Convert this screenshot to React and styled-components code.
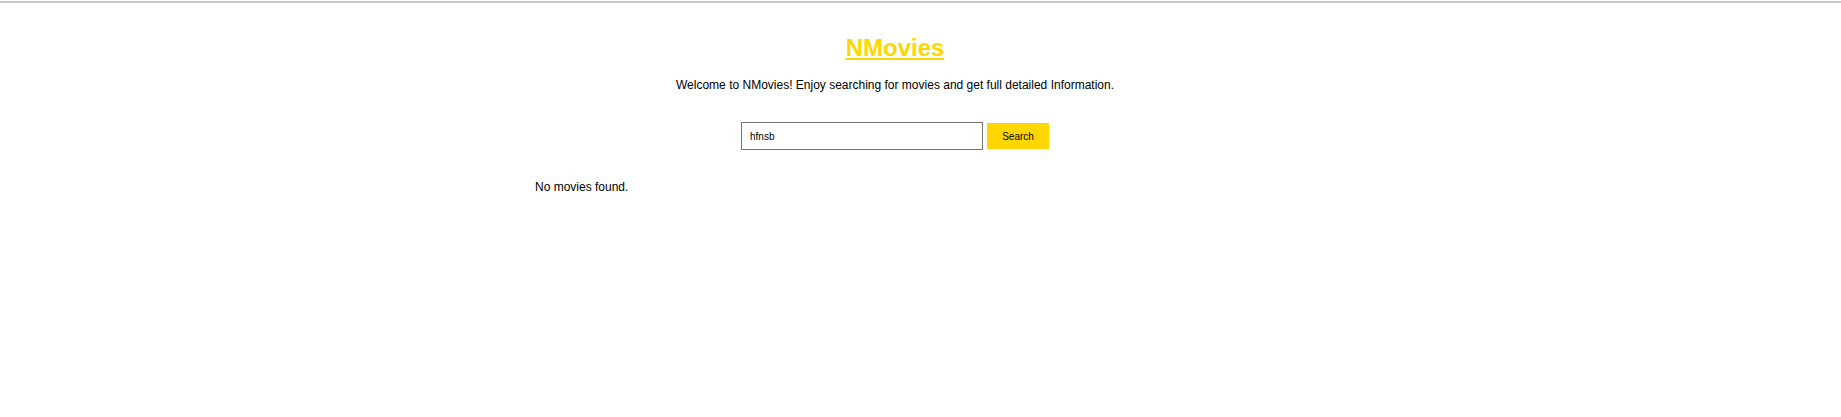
import React, { useState } from "react";
import styled, { createGlobalStyle } from "styled-components";

const GlobalStyle = createGlobalStyle`
  html, body {
    margin: 0;
    padding: 0;
    background: #ffffff;
    font-family: "Liberation Sans", Arial, sans-serif;
    color: #000000;
  }
`;

const TopLine = styled.div`
  height: 2px;
  margin-top: 1px;
  background: #c8c8c8;
`;

const Page = styled.div`
  width: 1790px;
  display: flex;
  flex-direction: column;
  align-items: center;
`;

const Header = styled.header`
  display: flex;
  flex-direction: column;
  align-items: center;
`;

const Title = styled.h1`
  margin: 31px 0 0;
  font-size: 24px;
  line-height: 28px;
  font-weight: 700;
`;

const TitleLink = styled.a`
  color: #ffd700;
  text-decoration: underline;
`;

const Subtitle = styled.p`
  margin: 16px 0 0;
  font-size: 12px;
  line-height: 14px;
`;

const SearchForm = styled.form`
  display: flex;
  align-items: center;
  gap: 4px;
  margin-top: 30px;
`;

const SearchInput = styled.input`
  box-sizing: border-box;
  width: 242px;
  height: 28px;
  padding: 0 8px;
  border: 1px solid #767676;
  border-radius: 0;
  font-family: "Liberation Sans", Arial, sans-serif;
  font-size: 10px;
  color: #000000;
  outline: none;
`;

const SearchButton = styled.button`
  box-sizing: border-box;
  width: 62px;
  height: 26px;
  border: none;
  border-radius: 0;
  background: #ffd700;
  color: #000000;
  font-family: "Liberation Sans", Arial, sans-serif;
  font-size: 10px;
  cursor: pointer;
`;

const Results = styled.section`
  width: 720px;
  margin-top: 30px;
`;

const Message = styled.p`
  margin: 0;
  font-size: 12px;
  line-height: 14px;
`;

export default function App() {
  const [query, setQuery] = useState("hfnsb");
  return (
    <>
      <GlobalStyle />
      <TopLine />
      <Page>
        <Header>
          <Title>
            <TitleLink href="#">NMovies</TitleLink>
          </Title>
          <Subtitle>
            Welcome to NMovies! Enjoy searching for movies and get full detailed Information.
          </Subtitle>
        </Header>
        <SearchForm onSubmit={(e) => e.preventDefault()}>
          <SearchInput
            type="text"
            value={query}
            onChange={(e) => setQuery(e.target.value)}
          />
          <SearchButton type="submit">Search</SearchButton>
        </SearchForm>
        <Results>
          <Message>No movies found.</Message>
        </Results>
      </Page>
    </>
  );
}
